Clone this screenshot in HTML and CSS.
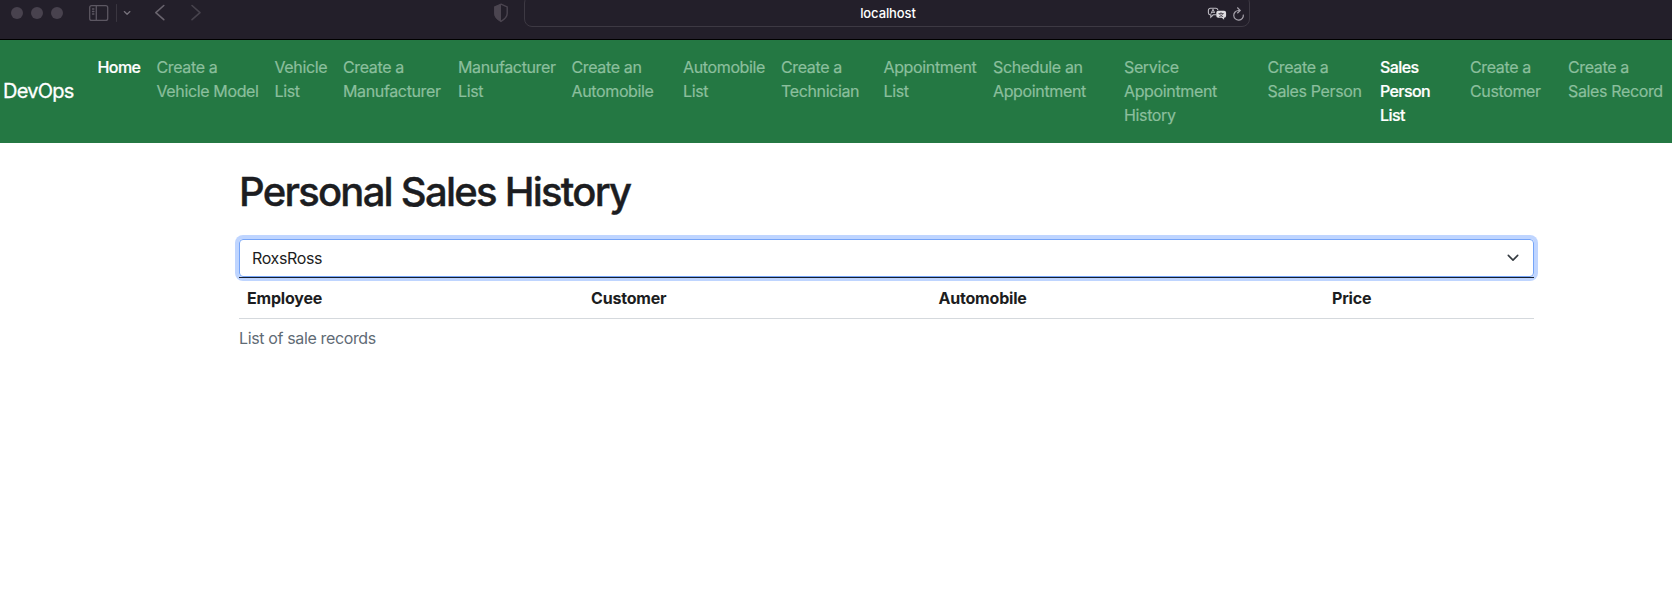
FILE: index.html
```html
<!DOCTYPE html>
<html lang="en">
<head>
<meta charset="utf-8">
<title>Personal Sales History</title>
<link rel="stylesheet" href="styles.css">
</head>
<body>
<header class="browser">
  <div class="window-tools">
    <i class="dot"></i><i class="dot"></i><i class="dot"></i>
    <svg class="tools-icon" width="130" height="26" viewBox="0 0 130 26" fill="none" stroke-linecap="round" stroke-linejoin="round">
      <g stroke="#5c5762" stroke-width="1.3"><rect x="8.7" y="5.6" width="18" height="14.8" rx="2"/><path d="M15.3 5.6v14.8M11.5 9h1.4M11.5 11.5h1.4M11.5 14h1.4"/></g>
      <path d="M35.5 4.5v17" stroke="#3a3640"/>
      <path d="M43.3 11.6l2.8 2.6 2.8-2.6" stroke="#77727c" stroke-width="1.3"/>
      <path d="M82.8 5.5l-8 7.2 8 7" stroke="#69646e" stroke-width="1.6"/>
      <path d="M111 5.5l8 7.2-8 7" stroke="#47434d" stroke-width="1.6"/>
    </svg>
  </div>
  <svg class="shield" width="16" height="20" viewBox="0 0 16 20"><path d="M8 1.2l6.2 2.7v6.6c0 3.5-2.5 5.6-6.2 7.900-3.700-2.300-6.200-4.400-6.200-7.900V3.900z" fill="none" stroke="#4b4550" stroke-width="1.4"/><path d="M8 1v17.700c-3.900-2.300-6.500-4.500-6.500-8V3.700z" fill="#4b4550"/></svg>
  <div class="address">
    <span class="url">localhost</span>
    <svg class="address-icons" width="42" height="24" viewBox="0 0 42 24" fill="none">
      <path d="M9.500 13.800H6.200l-2.400 2.400v-2.400H3a2 2 0 0 1-1.600-2V9.200a2 2 0 0 1 2-2h5.400a2 2 0 0 1 2 2" stroke="#bcb9c0" stroke-width="1.1"/>
      <path d="M4 12.700l2-4.500 1.600 3.600M4.800 11.300h2.500" stroke="#bcb9c0"/>
      <path d="M11.300 9.700h5.800a2 2 0 0 1 2 2v3.100a2 2 0 0 1-2 2v2l-2.300-2h-3.500a2 2 0 0 1-2-2v-3.100a2 2 0 0 1 2-2z" fill="#dedce0"/>
      <path d="M11.500 12.600h5.200M14 11.200v1.400M12.200 15.700c2-.6 3-1.600 3.500-3.100M12.600 12.800c.6 1.500 1.700 2.300 3.600 2.900" stroke="#4b4550" stroke-width=".9"/>
      <path d="M36.300 13.600a4.800 4.800 0 1 1-4.700-4.100h1.200M30.300 6.500l2.900 3-2.900 2.800" stroke="#a5a1aa" stroke-width="1.2"/>
    </svg>
  </div>
</header>
<nav class="navbar">
  <a class="brand">DevOps</a>
  <ul class="links">
    <li class="active">Home</li>
    <li>Create a<br>Vehicle Model</li>
    <li>Vehicle<br>List</li>
    <li>Create a<br>Manufacturer</li>
    <li>Manufacturer<br>List</li>
    <li>Create an<br>Automobile</li>
    <li>Automobile<br>List</li>
    <li>Create a<br>Technician</li>
    <li>Appointment<br>List</li>
    <li>Schedule an<br>Appointment</li>
    <li>Service<br>Appointment<br>History</li>
    <li>Create a<br>Sales Person</li>
    <li class="active">Sales<br>Person<br>List</li>
    <li>Create a<br>Customer</li>
    <li>Create a<br>Sales Record</li>
  </ul>
</nav>
<main class="content">
  <h1 class="title">Personal Sales History</h1>
  <div class="select"><span>RoxsRoss</span>
    <svg width="16" height="12" viewBox="0 0 16 12" fill="none"><path d="M3.300 3.400l4.700 4.700 4.700-4.700" stroke="#343a40" stroke-width="1.600" stroke-linecap="round" stroke-linejoin="round"/></svg>
  </div>
  <div class="table-head"><span>Employee</span><span>Customer</span><span>Automobile</span><span>Price</span></div>
  <p class="caption">List of sale records</p>
</main>
</body>
</html>
```
FILE: styles.css
```css
* { box-sizing: border-box; }
body { margin: 0; background: #fff; color: #1c1d21; font-family: Inter, "Liberation Sans", sans-serif; font-size: 16px; line-height: 24px; letter-spacing: -0.36px; }
.browser { display: flex; height: 40px; background: #231f2a; border-bottom: 1px solid #000; overflow: hidden; }
.window-tools { display: flex; width: 493px; height: 26px; align-items: center; padding-left: 11px; gap: 8px; }
.dot { width: 12px; height: 12px; border-radius: 50%; background: #48424e; }
.tools-icon { margin-left: 10px; }
.shield { margin-top: 3px; }
.address { display: flex; width: 726px; height: 32px; margin-top: -5px; margin-left: 15px; padding: 5px 0 0 0; border: 1px solid #3d3943; border-radius: 8px; }
.url { flex: 1; padding-left: 44px; color: #fff; font-size: 13px; font-weight: 500; line-height: 24px; text-align: center; letter-spacing: -0.1px; }
.navbar { display: flex; height: 103px; padding: 16px 0 0 3px; background: #247843; }
.brand { width: 94.5px; padding-top: 20px; color: #fff; font-size: 20px; line-height: 30px; letter-spacing: -0.75px; -webkit-text-stroke: 0.3px; }
.links { display: grid; grid-template-columns: 59px 118px 68.5px 115px 113.5px 111.5px 98px 102.5px 109.5px 131px 143.5px 112.5px 90px 98px 103px; margin: -1px 0 0; padding: 0; list-style: none; color: #8bbf9d; white-space: nowrap; align-items: start; -webkit-text-stroke: 0.2px; }
.active { color: #fff; font-weight: 500; letter-spacing: -0.6px; }
.content { width: 1295px; margin-left: 239px; }
.title { margin: 0; padding-top: 25px; height: 96px; font-size: 40px; font-weight: 500; line-height: 48px; letter-spacing: -1.75px; -webkit-text-stroke: 0.4px; }
.select { display: flex; height: 38px; align-items: center; justify-content: space-between; padding: 0 12px; border: 1px solid #76a5f8; border-radius: 4px; box-shadow: 0 0 0 4px #bfd5ff; }
.table-head { display: grid; position: relative; grid-template-columns: 344px 347.5px 393.5px 1fr; height: 42px; padding: 8px 0 0 8px; border-top: 1px solid #17202e; border-bottom: 1px solid #d5d9dd; font-weight: 700; letter-spacing: -0.2px; }
.caption { margin: 0; padding-top: 7px; color: #5f6b75; }
```
